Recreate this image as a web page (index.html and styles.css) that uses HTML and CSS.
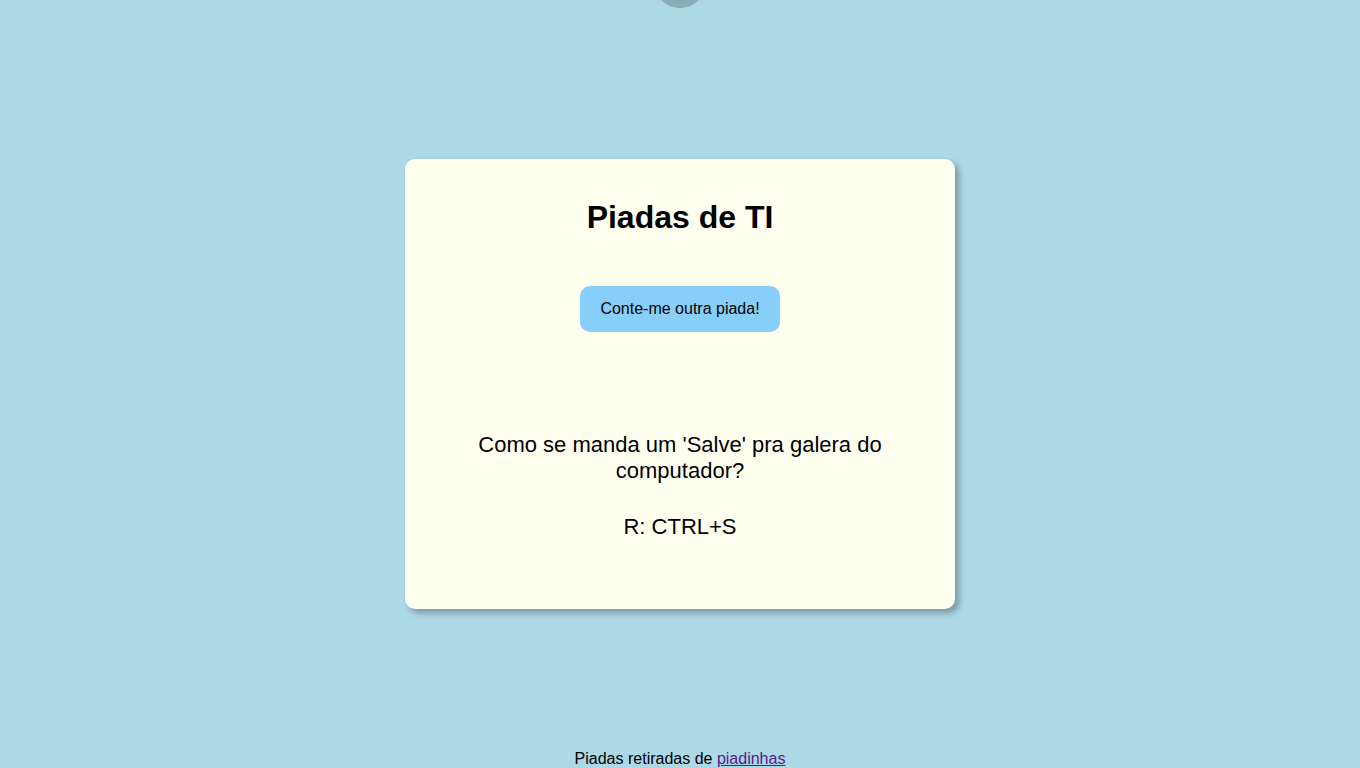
FILE: index.html
```html
<!DOCTYPE html>
<html lang="pt-BR">
<head>
<meta charset="utf-8">
<title>Piadas de TI</title>
<link rel="stylesheet" href="styles.css">
</head>
<body>
<div class="page">
  <div class="top"><div class="dot"></div></div>
  <main class="card">
    <h1 class="title">Piadas de TI</h1>
    <button class="btn">Conte-me outra piada!</button>
    <div class="joke">
      <p class="question">Como se manda um 'Salve' pra galera do computador?</p>
      <p class="answer">R: CTRL+S</p>
    </div>
  </main>
  <footer class="footer">Piadas retiradas de <a class="link" href="#">piadinhas</a></footer>
</div>
</body>
</html>
```
FILE: styles.css
```css
html, body {
  margin: 0;
  padding: 0;
}
body {
  background: #add8e6;
  font-family: "Liberation Sans", Arial, sans-serif;
  color: #000;
  overflow: hidden;
}
.page {
  height: 100vh;
  display: grid;
  grid-template-rows: 1fr auto 1fr;
  justify-items: center;
}
.top {
  align-self: start;
  display: flex;
  justify-content: center;
}
.dot {
  width: 54px;
  height: 54px;
  border-radius: 50%;
  background: rgba(0, 0, 0, 0.2);
  margin-top: -46px;
}
.card {
  width: 550px;
  box-sizing: border-box;
  background: #fffff0;
  border-radius: 10px;
  box-shadow: 4px 4px 6px rgba(0, 0, 0, 0.3);
  padding: 19px 40px 69px;
  display: flex;
  flex-direction: column;
  align-items: center;
  text-align: center;
}
.title {
  font-size: 32px;
  font-weight: bold;
  margin: 21px 0 0;
  line-height: 37px;
}
.btn {
  margin-top: 50px;
  width: 200px;
  height: 46px;
  border: none;
  border-radius: 10px;
  background: #87cefa;
  font-family: "Liberation Sans", Arial, sans-serif;
  font-size: 16px;
  color: #000;
  cursor: pointer;
}
.joke {
  margin-top: 100px;
  width: 100%;
  font-size: 22px;
  line-height: 26px;
}
.question {
  margin: 0;
  padding: 0 20px;
}
.answer {
  margin: 30px 0 0;
}
.footer {
  align-self: end;
  font-size: 16px;
  line-height: 18px;
  padding-bottom: 0;
}
.link {
  color: #551a8b;
}
```
